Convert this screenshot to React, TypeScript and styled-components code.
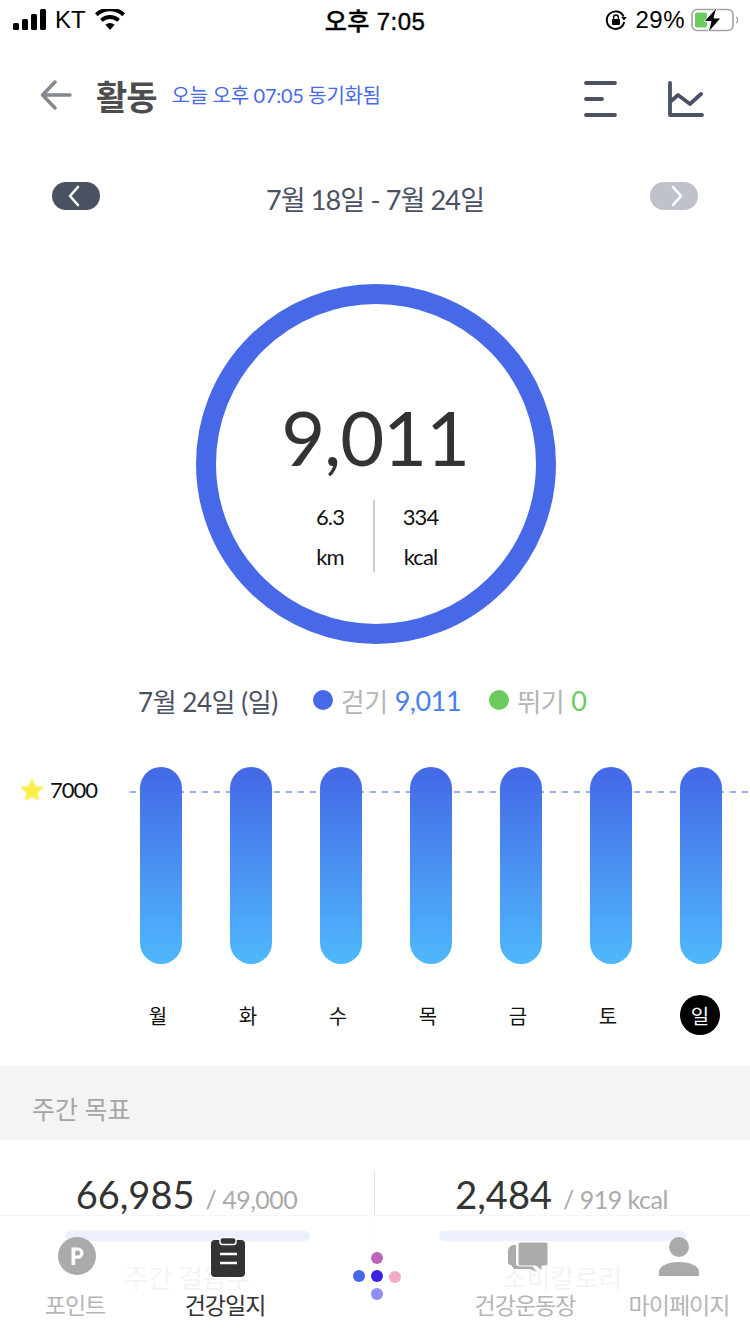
import styled, { createGlobalStyle } from 'styled-components';

const GlobalStyle = createGlobalStyle`
  html, body {
    margin: 0;
    padding: 0;
    background: #fff;
  }
  * {
    box-sizing: border-box;
  }
`;

const Page = styled.div`
  position: relative;
  width: 750px;
  height: 1334px;
  overflow: hidden;
  background: #fff;
  font-family: Lato, 'Noto Sans CJK KR', sans-serif;
`;

const StatusBar = styled.div`
  height: 40px;
  display: grid;
  grid-template-columns: 1fr auto 1fr;
  align-items: center;
  color: #000;
`;

const StatusLeft = styled.div`
  padding-left: 13px;
  display: flex;
  align-items: center;
  gap: 8px;
  font-family: 'Liberation Sans', 'Noto Sans CJK KR', sans-serif;
  font-size: 24px;
`;

const StatusTime = styled.div`
  font-family: 'Liberation Sans', 'Noto Sans CJK KR', sans-serif;
  font-size: 24px;
  font-weight: 500;
  letter-spacing: 0.4px;
  margin-top: -2px;
  -webkit-text-stroke: 0.4px #000;
`;

const StatusRight = styled.div`
  padding-right: 12px;
  display: flex;
  align-items: center;
  justify-content: flex-end;
  gap: 8px;
  font-family: 'Liberation Sans', sans-serif;
  font-size: 24px;
  letter-spacing: 0.5px;
`;

const Header = styled.div`
  height: 110px;
  padding: 0 46px 0 40px;
  display: flex;
  align-items: center;
`;

const BackIcon = styled.svg`
  width: 32px;
  height: 30px;
  margin-right: 24px;
`;

const Title = styled.div`
  font-size: 34px;
  font-weight: 700;
  color: #4d4d4d;
  letter-spacing: -1px;
  margin-right: 15px;
`;

const SyncText = styled.div`
  font-size: 20px;
  color: #4769e8;
  letter-spacing: -0.3px;
  margin-top: -2px;
  flex: 1;
`;

const HeaderIcons = styled.div`
  margin-top: 8px;
  display: flex;
  align-items: center;
  gap: 50px;
`;

const DateRow = styled.div`
  height: 40px;
  padding: 0 52px;
  margin-top: 28px;
  display: flex;
  align-items: center;
  justify-content: space-between;
`;

const ArrowPill = styled.div<{ $muted?: boolean }>`
  width: 48px;
  height: 28px;
  margin-top: -4px;
  padding: ${(p) => (p.$muted ? '0 0 0 5px' : '0 5px 0 0')};
  border-radius: 14px;
  background: ${(p) => (p.$muted ? '#bfc2ca' : '#4a5163')};
  display: flex;
  align-items: center;
  justify-content: center;
`;

const DateText = styled.div`
  font-size: 27px;
  color: #4a5163;
  letter-spacing: -0.85px;
`;

const RingWrap = styled.div`
  display: flex;
  justify-content: center;
  padding-top: 66px;
  padding-left: 2px;
`;

const Ring = styled.div`
  width: 360px;
  height: 360px;
  border: 20px solid #4769e8;
  border-radius: 50%;
  display: flex;
  flex-direction: column;
  align-items: center;
`;

const Steps = styled.div`
  margin-top: 93px;
  margin-left: -2px;
  font-size: 76px;
  line-height: 80px;
  color: #333;
  letter-spacing: -1.2px;
`;

const RingStats = styled.div`
  margin-top: 23px;
  margin-left: -4px;
  display: flex;
  align-items: stretch;
`;

const RingStat = styled.div`
  width: 86px;
  text-align: center;
  font-size: 22px;
  line-height: 40px;
  color: #111;
  letter-spacing: -0.9px;
  margin-top: -3px;

  &:last-child {
    padding-left: 5px;
  }
`;

const RingDivider = styled.div`
  width: 2px;
  height: 72px;
  background: #ccc;
`;

const Legend = styled.div`
  margin-top: 37px;
  height: 38px;
  padding-left: 138px;
  display: flex;
  align-items: center;
  font-size: 26px;
  letter-spacing: -0.45px;
`;

const LegendDate = styled.div`
  color: #4a5163;
  margin-right: 35px;
`;

const LegendItem = styled.div`
  display: flex;
  align-items: center;
  color: #b5b5b5;
  margin-right: 28px;
`;

const LegendDot = styled.span<{ $color: string }>`
  width: 20px;
  height: 20px;
  border-radius: 50%;
  background: ${(p) => p.$color};
  margin-right: 8px;
`;

const LegendValue = styled.span<{ $color: string }>`
  color: ${(p) => p.$color};
  font-size: 27px;
  margin-left: 7px;
`;

const Chart = styled.div`
  position: relative;
  margin-top: 48px;
  display: flex;
`;

const GoalLabel = styled.div`
  width: 116px;
  height: 45px;
  padding-left: 20px;
  display: flex;
  align-items: center;
  gap: 6px;
  font-size: 22px;
  letter-spacing: -1px;
  color: #111;
`;

const GoalLine = styled.div`
  position: absolute;
  left: 130px;
  right: 0;
  top: 24px;
  height: 2px;
  background: repeating-linear-gradient(90deg, #9cb0f5 0 6px, transparent 6px 12px);
`;

const Columns = styled.div`
  position: relative;
  display: grid;
  grid-template-columns: repeat(7, 90px);
`;

const Column = styled.div`
  display: flex;
  flex-direction: column;
  align-items: center;
`;

const Bar = styled.div`
  width: 42px;
  height: 197px;
  border-radius: 21px;
  background: linear-gradient(180deg, #4468e6 0%, #4fb8fc 100%);
`;

const DayLabel = styled.div<{ $active?: boolean }>`
  width: 40px;
  height: 40px;
  margin-top: 31px;
  margin-left: ${(p) => (p.$active ? '-2px' : '-6px')};
  border-radius: 50%;
  display: flex;
  align-items: center;
  justify-content: center;
  font-size: 20px;
  color: ${(p) => (p.$active ? '#fff' : '#111')};
  background: ${(p) => (p.$active ? '#000' : 'transparent')};
`;

const SectionTitle = styled.div`
  margin-top: 31px;
  height: 74px;
  padding: 24px 32px 0;
  background: #f4f4f4;
  font-size: 25px;
  color: #a5a5a5;
`;

const Goals = styled.div`
  display: grid;
  grid-template-columns: 375px 375px;
  padding-top: 31px;
`;

const GoalCell = styled.div<{ $divided?: boolean }>`
  height: 130px;
  display: flex;
  flex-direction: column;
  align-items: center;
  border-left: ${(p) => (p.$divided ? '1px solid #e3e3e3' : 'none')};
  margin-left: ${(p) => (p.$divided ? '-1px' : '0')};
`;

const GoalNumbers = styled.div`
  height: 48px;
  margin-top: -2px;
  margin-left: -2px;
  display: flex;
  align-items: baseline;
`;

const GoalValue = styled.span`
  font-size: 38px;
  line-height: 50px;
  color: #333;
`;

const GoalTarget = styled.span`
  font-size: 25px;
  color: #aaa;
  letter-spacing: -0.5px;
  margin-left: 11px;
`;

const Track = styled.div<{ $width: number }>`
  width: ${(p) => p.$width}px;
  height: 10px;
  margin-top: 14px;
  border-radius: 5px;
  background: #4769e8;
`;

const GoalCaption = styled.div`
  margin-top: 17px;
  font-size: 26px;
  color: #8a8a8a;
`;

const TabBar = styled.div`
  position: absolute;
  left: 0;
  right: 0;
  bottom: 0;
  height: 119px;
  border-top: 1px solid #f6f6f6;
  background: rgba(255, 255, 255, 0.9);
  display: grid;
  grid-template-columns: 150px 150px 150px 150px 150px;
`;

const Tab = styled.div<{ $active?: boolean }>`
  display: flex;
  flex-direction: column;
  align-items: center;
  color: ${(p) => (p.$active ? '#333' : '#b5b5b5')};
  font-size: 23px;
  letter-spacing: -1px;

  &:last-child {
    padding-left: 8px;
  }
`;

const TabIcon = styled.div<{ $nudge?: number }>`
  height: 50px;
  margin-top: 21px;
  margin-left: ${(p) => p.$nudge ?? 0}px;
  display: flex;
  align-items: flex-start;
  justify-content: center;
`;

const Brand = styled.div`
  padding-top: 35px;
  padding-left: 10px;
  display: flex;
  justify-content: center;
`;

const days = ['월', '화', '수', '목', '금', '토', '일'];

export default function App() {
  return (
    <Page>
      <GlobalStyle />
      <StatusBar>
        <StatusLeft>
          <svg width="34" height="22" viewBox="0 0 34 22">
            <rect x="0" y="14" width="6" height="7" rx="1.5" fill="#000" />
            <rect x="9" y="10" width="6" height="11" rx="1.5" fill="#000" />
            <rect x="18" y="5" width="6" height="16" rx="1.5" fill="#000" />
            <rect x="27" y="0" width="6" height="21" rx="1.5" fill="#000" />
          </svg>
          <span>KT</span>
          <svg width="30" height="22" viewBox="0 0 30 22" style={{ marginLeft: 1 }}>
            <path d="M15 21l-4.6-5.2a6.6 6.6 0 0 1 9.2 0z" fill="#000" />
            <path d="M7.7 12.8a10.6 10.6 0 0 1 14.6 0l2.6-2.9a14.6 14.6 0 0 0-19.8 0z" fill="#000" />
            <path d="M2.6 7.2a18 18 0 0 1 24.8 0L30 4.3a22 22 0 0 0-30 0z" fill="#000" />
          </svg>
        </StatusLeft>
        <StatusTime>오후 7:05</StatusTime>
        <StatusRight>
          <svg width="22" height="22" viewBox="0 0 22 22">
            <path d="M18.6 7.5a8.8 8.8 0 1 0 .6 5.5" fill="none" stroke="#000" strokeWidth="1.9" />
            <path d="M16.2 8h5.6L19 11.4z" fill="#000" />
            <rect x="7" y="10" width="8" height="6" rx="1" fill="#000" />
            <path d="M8.6 10V8.4a2.4 2.4 0 0 1 4.8 0V10" fill="none" stroke="#000" strokeWidth="1.4" />
          </svg>
          <span>29%</span>
          <svg width="47" height="26" viewBox="0 0 47 26" style={{ marginLeft: -2 }}>
            <rect x="1" y="2.5" width="41" height="21" rx="5" fill="none" stroke="#a3a3a3" strokeWidth="1.6" />
            <path d="M45 10a3.5 3.5 0 0 1 0 6" fill="none" stroke="#a3a3a3" strokeWidth="1.4" />
            <rect x="4" y="5.5" width="12" height="15" rx="2" fill="#6bcb5f" />
            <path d="M26 0L13 14.5h7L17 26l13-15h-7z" fill="#000" stroke="#fff" strokeWidth="1" />
          </svg>
        </StatusRight>
      </StatusBar>

      <Header>
        <BackIcon viewBox="0 0 32 30">
          <path d="M30 15H3M15 2L2.5 15 15 28" fill="none" stroke="#83888f" strokeWidth="3.4" strokeLinecap="round" strokeLinejoin="round" />
        </BackIcon>
        <Title>활동</Title>
        <SyncText>오늘 오후 07:05 동기화됨</SyncText>
        <HeaderIcons>
          <svg width="34" height="36" viewBox="0 0 34 36">
            <path d="M2 2h29M2 18h16M2 34h29" fill="none" stroke="#4a5163" strokeWidth="3.8" strokeLinecap="round" />
          </svg>
          <svg width="36" height="36" viewBox="0 0 36 36">
            <path d="M2 2v32h32M2 21l8-7 12 9 11-10" fill="none" stroke="#4a5163" strokeWidth="3.8" strokeLinecap="round" strokeLinejoin="round" />
          </svg>
        </HeaderIcons>
      </Header>

      <DateRow>
        <ArrowPill>
          <svg width="14" height="22" viewBox="0 0 14 22">
            <path d="M11 2L3 11l8 9" fill="none" stroke="#fff" strokeWidth="2.6" strokeLinecap="round" strokeLinejoin="round" />
          </svg>
        </ArrowPill>
        <DateText>7월 18일 - 7월 24일</DateText>
        <ArrowPill $muted>
          <svg width="14" height="22" viewBox="0 0 14 22">
            <path d="M3 2l8 9-8 9" fill="none" stroke="#fff" strokeWidth="2.6" strokeLinecap="round" strokeLinejoin="round" />
          </svg>
        </ArrowPill>
      </DateRow>

      <RingWrap>
        <Ring>
          <Steps>9,011</Steps>
          <RingStats>
            <RingStat>
              6.3
              <br />
              km
            </RingStat>
            <RingDivider />
            <RingStat>
              334
              <br />
              kcal
            </RingStat>
          </RingStats>
        </Ring>
      </RingWrap>

      <Legend>
        <LegendDate>7월 24일 (일)</LegendDate>
        <LegendItem>
          <LegendDot $color="#4769e8" />
          걷기
          <LegendValue $color="#4480ee">9,011</LegendValue>
        </LegendItem>
        <LegendItem>
          <LegendDot $color="#6bcb5f" />
          뛰기
          <LegendValue $color="#6bcb5f">0</LegendValue>
        </LegendItem>
      </Legend>

      <Chart>
        <GoalLabel>
          <svg width="24" height="24" viewBox="0 0 24 24">
            <path d="M12 0.5l3.5 7.6 8.2 1-6 5.7 1.6 8.2L12 19l-7.3 4 1.6-8.2-6-5.7 8.2-1z" fill="#fdf04a" />
          </svg>
          7000
        </GoalLabel>
        <GoalLine />
        <Columns>
          {days.map((day, i) => (
            <Column key={day}>
              <Bar />
              <DayLabel $active={i === days.length - 1}>{day}</DayLabel>
            </Column>
          ))}
        </Columns>
      </Chart>

      <SectionTitle>주간 목표</SectionTitle>

      <Goals>
        <GoalCell>
          <GoalNumbers>
            <GoalValue>66,985</GoalValue>
            <GoalTarget>/ 49,000</GoalTarget>
          </GoalNumbers>
          <Track $width={245} />
          <GoalCaption>주간 걸음수</GoalCaption>
        </GoalCell>
        <GoalCell $divided>
          <GoalNumbers>
            <GoalValue>2,484</GoalValue>
            <GoalTarget>/ 919 kcal</GoalTarget>
          </GoalNumbers>
          <Track $width={247} />
          <GoalCaption>소비칼로리</GoalCaption>
        </GoalCell>
      </Goals>

      <TabBar>
        <Tab>
          <TabIcon $nudge={3}>
            <svg width="38" height="38" viewBox="0 0 38 38">
              <circle cx="19" cy="19" r="19" fill="#aaa" />
              <path d="M13.5 28V10.5h6.5a5.6 5.6 0 0 1 0 11.2h-2.8V28z M17.2 13.6v5h2.6a2.5 2.5 0 0 0 0-5z" fill="#fff" fillRule="evenodd" />
            </svg>
          </TabIcon>
          포인트
        </Tab>
        <Tab $active>
          <TabIcon $nudge={5}>
            <svg width="34" height="40" viewBox="0 0 34 40">
              <rect x="0" y="3" width="34" height="37" rx="4" fill="#333" />
              <rect x="9" y="0.5" width="16" height="7" rx="2.5" fill="#333" stroke="#fff" strokeWidth="1.4" />
              <path d="M9 17h17M9 26h17" stroke="#fff" strokeWidth="2.4" />
            </svg>
          </TabIcon>
          건강일지
        </Tab>
        <Brand>
          <svg width="54" height="50" viewBox="0 0 54 50">
            <circle cx="6" cy="25" r="6" fill="#4769e8" />
            <circle cx="24" cy="7" r="6" fill="#bb66b8" />
            <circle cx="24" cy="25" r="6" fill="#3a22e0" />
            <circle cx="24" cy="43" r="6" fill="#8f8cf7" />
            <circle cx="42" cy="26" r="6" fill="#f3a9c8" />
          </svg>
        </Brand>
        <Tab>
          <TabIcon $nudge={5}>
            <svg width="40" height="30" viewBox="0 0 40 30" style={{ marginTop: 5 }}>
              <path d="M6 3h2v19a2 2 0 0 0 2 2h14l5 6-7-3H7l-1 0-3-4a3 3 0 0 1-3-3V9a6 6 0 0 1 6-6z" fill="#aaa" />
              <path d="M10 0h28a2 2 0 0 1 2 2v20a2 2 0 0 1-2 2h-4v5l-6-5H12a2 2 0 0 1-2-2V2a2 2 0 0 1 2-2z" fill="#aaa" stroke="#fff" strokeWidth="1" />
            </svg>
          </TabIcon>
          건강운동장
        </Tab>
        <Tab>
          <TabIcon>
            <svg width="40" height="40" viewBox="0 0 40 40">
              <circle cx="20" cy="10" r="10" fill="#aaa" />
              <path d="M0 39v-4c0-7 11-10 20-10s20 3 20 10v4z" fill="#aaa" />
            </svg>
          </TabIcon>
          마이페이지
        </Tab>
      </TabBar>
    </Page>
  );
}
